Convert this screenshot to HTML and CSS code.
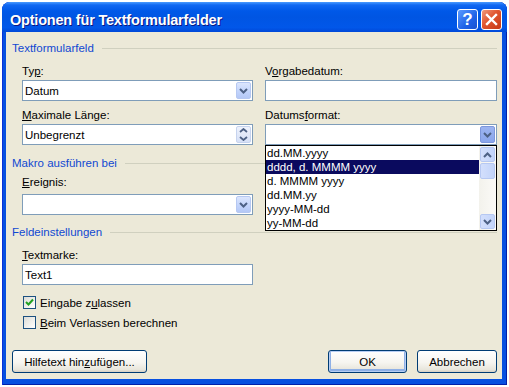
FILE: index.html
```html
<!DOCTYPE html>
<html lang="de">
<head>
  <meta charset="UTF-8" />
  <title>Optionen für Textformularfelder</title>
  <link rel="stylesheet" href="styles.css">
</head>
<body>
  <div class="window">
    <div class="titlebar">
      <span class="title">Optionen für Textformularfelder</span>
      <div class="caption-btns">
        <span class="cap-btn help">?</span>
        <span class="cap-btn close">
          <svg viewBox="0 0 21 21" width="21" height="21">
            <path d="M6 6 L15 15 M15 6 L6 15" stroke="#fff" stroke-width="2.4" stroke-linecap="square" />
          </svg>
        </span>
      </div>
    </div>

    <div class="client">
      <div class="group-head">Textformularfeld</div>

      <div class="cols">
        <div class="col">
          <label class="lbl">Ty<u>p</u>:</label>
          <div class="combo">
            <span class="value">Datum</span>
            <span class="drop-btn">
              <svg viewBox="0 0 9 6" width="9" height="6"><path d="M1 1 L4.5 4.5 L8 1" fill="none" stroke="#4D6185" stroke-width="2" /></svg>
            </span>
          </div>
          <label class="lbl lbl-gap"><u>M</u>aximale Länge:</label>
          <div class="combo">
            <span class="value">Unbegrenzt</span>
            <span class="spin-btn">
              <svg viewBox="0 0 9 5" width="9" height="5"><path d="M1 4 L4.5 1 L8 4" fill="none" stroke="#4D6185" stroke-width="1.8" /></svg>
              <svg viewBox="0 0 9 5" width="9" height="5"><path d="M1 1 L4.5 4 L8 1" fill="none" stroke="#4D6185" stroke-width="1.8" /></svg>
            </span>
          </div>
        </div>

        <div class="col">
          <label class="lbl">V<u>o</u>rgabedatum:</label>
          <div class="textbox"></div>
          <label class="lbl lbl-gap">Datums<u>f</u>ormat:</label>
          <div class="combo">
            <span class="value"></span>
            <span class="drop-btn pressed">
              <svg viewBox="0 0 9 6" width="9" height="6"><path d="M1 1 L4.5 4.5 L8 1" fill="none" stroke="#4D6185" stroke-width="2" /></svg>
            </span>
            <div class="droplist">
              <div class="options">
                <div class="opt">dd.MM.yyyy</div>
                <div class="opt sel">dddd, d. MMMM yyyy</div>
                <div class="opt">d. MMMM yyyy</div>
                <div class="opt">dd.MM.yy</div>
                <div class="opt">yyyy-MM-dd</div>
                <div class="opt">yy-MM-dd</div>
              </div>
              <div class="vscroll">
                <span class="sb-btn">
                  <svg viewBox="0 0 9 6" width="9" height="6"><path d="M1 5 L4.5 1.5 L8 5" fill="none" stroke="#4D6185" stroke-width="2" /></svg>
                </span>
                <span class="sb-thumb"></span>
                <span class="sb-track"></span>
                <span class="sb-btn">
                  <svg viewBox="0 0 9 6" width="9" height="6"><path d="M1 1 L4.5 4.5 L8 1" fill="none" stroke="#4D6185" stroke-width="2" /></svg>
                </span>
              </div>
            </div>
          </div>
        </div>
      </div>

      <div class="group-head gh-2">Makro ausführen bei</div>
      <div class="field">
        <label class="lbl lbl-event"><u>E</u>reignis:</label>
        <div class="combo">
          <span class="value"></span>
          <span class="drop-btn">
            <svg viewBox="0 0 9 6" width="9" height="6"><path d="M1 1 L4.5 4.5 L8 1" fill="none" stroke="#4D6185" stroke-width="2" /></svg>
          </span>
        </div>
      </div>

      <div class="group-head gh-3">Feldeinstellungen</div>
      <div class="field">
        <label class="lbl lbl-mark"><u>T</u>extmarke:</label>
        <div class="textbox"><span class="value">Text1</span></div>
      </div>

      <div class="chk-row first">
        <span class="chk checked">
          <svg viewBox="0 0 11 11" width="11" height="11"><path d="M2 5 L4.5 7.5 L9 2.5" fill="none" stroke="#21A121" stroke-width="2" /></svg>
        </span>
        <span>Eingabe z<u>u</u>lassen</span>
      </div>
      <div class="chk-row">
        <span class="chk"></span>
        <span><u>B</u>eim Verlassen berechnen</span>
      </div>

      <div class="footer">
        <button class="btn btn-help">Hilfetext hin<u>z</u>ufügen...</button>
        <button class="btn btn-ok default">OK</button>
        <button class="btn btn-cancel">Abbrechen</button>
      </div>
    </div>
  </div>
</body>
</html>
```

FILE: styles.css
```css
* { box-sizing: border-box; }

body {
  margin: 0;
  background: #fff;
  font-family: 'Liberation Sans', Arial, sans-serif;
  font-size: 11.5px;
  color: #000;
}

u { text-decoration: underline; text-underline-offset: 1px; }

.window {
  width: 505px;
  height: 383px;
  margin: 2px 0 0 2px;
  display: flex;
  flex-direction: column;
  background: #0750E0;
  border-radius: 8px 8px 0 0;
  box-shadow: inset 1px 0 #0831D9, inset -1px 0 #0020A8, inset 0 -1px #0020A8;
}

.titlebar {
  height: 30px;
  flex-shrink: 0;
  display: flex;
  align-items: center;
  justify-content: space-between;
  padding: 5px 5px 0 8px;
  border-radius: 8px 8px 0 0;
  background: linear-gradient(#4A9BFF 0, #1168F2 3px, #0058E8 9px, #0055E3 50%, #0157E9 85%, #0048D8 100%);
}

.title {
  color: #fff;
  font-weight: bold;
  font-size: 14.5px;
  letter-spacing: -0.2px;
  text-shadow: 1px 1px #0A1883;
}

.caption-btns {
  display: flex;
  gap: 3px;
}

.cap-btn {
  width: 21px;
  height: 21px;
  border: 1px solid #fff;
  border-radius: 3px;
  display: flex;
  align-items: center;
  justify-content: center;
}

.cap-btn svg { display: block; margin: -1px; }

.help {
  background: linear-gradient(135deg, #5A9BFF, #1F62E8 60%, #1A52D0);
  color: #fff;
  font-weight: bold;
  font-size: 17px;
}

.close {
  background: linear-gradient(135deg, #F09A7C, #E0542E 45%, #C53A18);
}

.client {
  flex: 1;
  margin: 0 5px 6px 4px;
  background: #ECE9D8;
  display: flex;
  flex-direction: column;
  padding: 9px 5px 6px 6px;
}

.group-head {
  display: flex;
  align-items: center;
  gap: 8px;
  height: 14px;
  line-height: 14px;
  color: #1048D2;
}

.group-head::after {
  content: "";
  flex: 1;
  height: 1px;
  background: #D0D0BF;
}

.gh-2 { margin-top: 11px; }
.gh-3 { margin-top: 10px; }

.cols {
  display: grid;
  grid-template-columns: 231px 232px;
  gap: 12px;
  margin-left: 10px;
}

.lbl {
  display: block;
  height: 14px;
  line-height: 14px;
  margin: 9px 0 2px;
}

.lbl-gap { margin-top: 7px; }
.lbl-event { margin: 5px 0 5px; }
.lbl-mark { margin: 9px 0 2px; }

.field {
  margin-left: 10px;
  width: 231px;
}

.combo, .textbox {
  position: relative;
  height: 21px;
  border: 1px solid #7F9DB9;
  background: #fff;
  display: flex;
  align-items: center;
  padding-left: 2px;
}

.value { flex: 1; }

.drop-btn, .spin-btn {
  width: 15px;
  height: 17px;
  margin: 0 1px;
  border: 1px solid #B6C8F2;
  border-radius: 2px;
  background: linear-gradient(#DCE6FD, #C1D3FB 60%, #B4C8F6);
  display: flex;
  align-items: center;
  justify-content: center;
}

.drop-btn.pressed {
  background: linear-gradient(#9CB4F0, #8AA6EC);
  border-color: #7E98DC;
}

.spin-btn {
  flex-direction: column;
  gap: 3px;
  background: linear-gradient(#EEF2FC, #D6E0F6);
  border-color: #C6D3EE;
}

.drop-btn svg, .spin-btn svg { display: block; }

.droplist {
  position: absolute;
  top: calc(100% + 1px);
  left: -1px;
  right: -1px;
  height: 86px;
  border: 1px solid #000;
  background: #fff;
  display: flex;
  z-index: 2;
}

.options {
  flex: 1;
}

.opt {
  height: 14px;
  line-height: 14px;
  padding-left: 1px;
  white-space: nowrap;
}

.opt.sel {
  background: #0A0A5E;
  color: #fff;
}

.vscroll {
  width: 17px;
  padding: 1px;
  display: flex;
  flex-direction: column;
  background: linear-gradient(90deg, #F3F2EC, #FBFAF7);
}

.sb-btn, .sb-thumb {
  height: 15px;
  border: 1px solid #B6C8F2;
  border-radius: 2px;
  background: linear-gradient(90deg, #D3DFFC, #C3D4FA);
  display: flex;
  align-items: center;
  justify-content: center;
}

.sb-thumb { margin-top: 1px; height: 16px; }
.sb-track { flex: 1; }

.chk-row {
  display: flex;
  align-items: center;
  gap: 4px;
  height: 13px;
  margin: 7px 0 0 11px;
}

.chk-row.first { margin-top: 11px; }

.chk {
  width: 13px;
  height: 13px;
  border: 1px solid #1C5180;
  background: linear-gradient(135deg, #DCDCD7, #F5F5F2 70%, #fff);
  display: flex;
  align-items: center;
  justify-content: center;
}

.chk svg { display: block; }

.footer {
  margin-top: auto;
  display: flex;
  gap: 10px;
}

.btn {
  height: 23px;
  border: 1px solid #003C74;
  border-radius: 3px;
  background: linear-gradient(#FFFFFF, #F6F5F0 55%, #E8E6DC 88%, #D6D0C5);
  font: inherit;
  color: #000;
  padding: 0;
}

.btn-help { width: 135px; }
.btn-ok { width: 79px; margin-left: auto; }
.btn-cancel { width: 80px; }

.btn.default {
  box-shadow: inset 0 0 0 1px #B7CEF4, inset 0 -1px 0 2px #8FB0E6;
}
```
